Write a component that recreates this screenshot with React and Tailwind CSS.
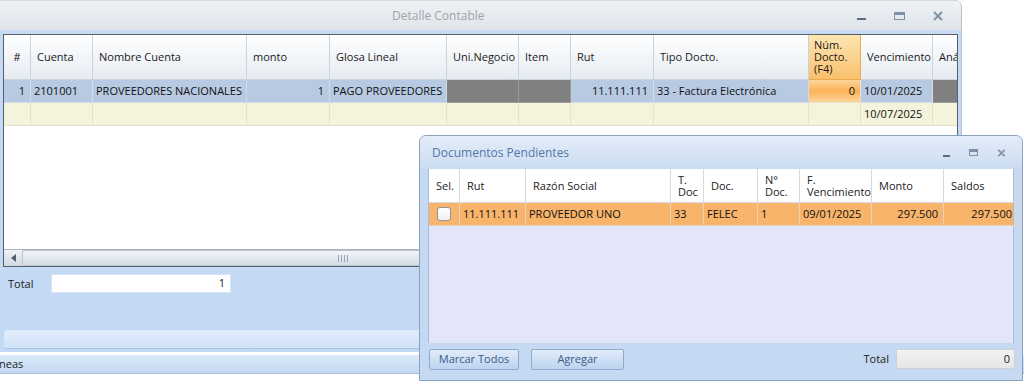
import React from 'react';

const mainCols = [
  { label: '#', w: 'w-[27px]', center: true },
  { label: 'Cuenta', w: 'w-[62px]' },
  { label: 'Nombre Cuenta', w: 'w-[154px]' },
  { label: 'monto', w: 'w-[83px]' },
  { label: 'Glosa Lineal', w: 'w-[117px]' },
  { label: 'Uni.Negocio', w: 'w-[72px]' },
  { label: 'Item', w: 'w-[52px]' },
  { label: 'Rut', w: 'w-[83px]' },
  { label: 'Tipo Docto.', w: 'w-[155px]' },
  { label: 'Núm. Docto. (F4)', w: 'w-[52px]', active: true },
  { label: 'Vencimiento', w: 'w-[72px]' },
  { label: 'Análisis', w: 'w-[80px]' },
];

const row1 = [
  { v: '1', right: true },
  { v: '2101001' },
  { v: 'PROVEEDORES NACIONALES' },
  { v: '1', right: true },
  { v: 'PAGO PROVEEDORES' },
  { v: '', dark: true },
  { v: '', dark: true },
  { v: '11.111.111', right: true },
  { v: '33 - Factura Electrónica' },
  { v: '0', right: true, active: true },
  { v: '10/01/2025' },
  { v: '', dark: true },
];

const popCols = [
  { label: ['Sel.'], w: 'w-[31px]' },
  { label: ['Rut'], w: 'w-[66px]' },
  { label: ['Razón Social'], w: 'w-[145px]' },
  { label: ['T.', 'Doc'], w: 'w-[33px]' },
  { label: ['Doc.'], w: 'w-[54px]' },
  { label: ['N°', 'Doc.'], w: 'w-[42px]' },
  { label: ['F.', 'Vencimiento'], w: 'w-[72px]' },
  { label: ['Monto'], w: 'w-[72px]' },
  { label: ['Saldos'], w: 'w-[74px]' },
];

const popRow = [
  { v: 'check' },
  { v: '11.111.111' },
  { v: 'PROVEEDOR UNO' },
  { v: '33' },
  { v: 'FELEC' },
  { v: '1' },
  { v: '09/01/2025' },
  { v: '297.500', right: true },
  { v: '297.500', right: true },
];

const WinButtons = ({ small }) => (
  <div className={`flex items-center ${small ? 'gap-[19px]' : 'gap-[28px]'}`}>
    <div className={`${small ? 'w-[7px] mt-[7px]' : 'w-[9px] mt-[7px]'} h-[2px] bg-[#5d6e84]`} />
    <div className={`${small ? 'w-[9px] h-[7px]' : 'w-[11px] h-[8px]'} border border-t-[3px] border-[#7f91a8]`} />
    <svg width={small ? 9 : 10} height={small ? 8 : 10} viewBox="0 0 10 10">
      <path d="M1 1 L9 9 M9 1 L1 9" stroke="#8595aa" strokeWidth="2.2" />
    </svg>
  </div>
);

const MainWindow = () => (
  <div className="w-[962px] h-[352px] flex flex-col bg-[#c4d9f3] border-r border-[#b7bfc9] rounded-tr-[7px] overflow-hidden">
    <div className="h-[30px] shrink-0 flex items-center bg-gradient-to-b from-[#eef1f5] to-[#e0e5eb] border-t border-[#d3d8de]">
      <div className="pl-[392px] text-[12px] text-[#a0a4a9] w-[857px]">Detalle Contable</div>
      <WinButtons />
    </div>
    <div className="h-[4px] shrink-0 bg-[#c8dbf2]" />
    <div className="mx-[3px] h-[233px] shrink-0 border border-[#56606c] bg-white flex flex-col overflow-hidden">
      <div className="flex h-[45px] shrink-0">
        {mainCols.map((c, i) =>
          c.active ? (
            <div
              key={i}
              className={`${c.w} shrink-0 flex items-center border-r border-b text-[11px] leading-[12px] bg-gradient-to-b from-[#fde6b2] to-[#f8c06c] border-[#f0a94e] pl-[5px] pr-[2px] text-[#1a1a1a]`}
            >
              {c.label}
            </div>
          ) : (
            <div
              key={i}
              className={`${c.w} shrink-0 flex items-center border-r border-b text-[11px] leading-[12px] whitespace-nowrap bg-gradient-to-b from-[#ffffff] to-[#e6ebf1] border-[#c9d3df] ${
                c.center ? 'justify-center' : 'pl-[6px]'
              } text-[#1a1a1a]`}
            >
              {c.label}
            </div>
          )
        )}
      </div>
      <div className="flex h-[23px] shrink-0 bg-[#b7cae2]">
        {row1.map((c, i) => (
          <div
            key={i}
            className={`${mainCols[i].w} shrink-0 flex items-center border-r border-b text-[11px] whitespace-nowrap overflow-hidden ${
              c.right ? 'justify-end pr-[5px]' : 'pl-[3px]'
            } ${
              c.dark
                ? 'bg-[#808080] border-[#9a9a9a]'
                : c.active
                ? 'bg-gradient-to-b from-[#fdd597] via-[#fbb257] to-[#fdd597] border-[#e9e2d0]'
                : 'border-[#d3dde9]'
            } text-[#111]`}
          >
            {c.v}
          </div>
        ))}
      </div>
      <div className="flex h-[23px] shrink-0 bg-[#f4f4dc]">
        {mainCols.map((c, i) => (
          <div
            key={i}
            className={`${c.w} shrink-0 flex items-center border-r border-b border-[#e2e2cf] text-[11px] pl-[3px] text-[#111]`}
          >
            {i === 10 ? '10/07/2025' : ''}
          </div>
        ))}
      </div>
      <div className="flex-1" />
      <div className="h-[17px] shrink-0 flex border-t border-[#aab5c3] bg-[#e4e9ef]">
        <div className="w-[18px] flex items-center justify-center bg-gradient-to-b from-[#eef2f6] to-[#d2d9e2]">
          <svg width="5" height="8" viewBox="0 0 5 8">
            <path d="M5 0 L0 4 L5 8 Z" fill="#56606c" />
          </svg>
        </div>
        <div className="w-[642px] flex items-center justify-center bg-gradient-to-b from-[#f2f5f8] to-[#d6dde6] border border-[#b9c3cf] rounded-[2px]">
          <div className="flex gap-[2px]">
            <div className="w-px h-[7px] bg-[#9aa5b3]" />
            <div className="w-px h-[7px] bg-[#9aa5b3]" />
            <div className="w-px h-[7px] bg-[#9aa5b3]" />
            <div className="w-px h-[7px] bg-[#9aa5b3]" />
          </div>
        </div>
      </div>
    </div>
    <div className="h-[63px] shrink-0 flex items-start pt-[7px] pl-[8px]">
      <div className="text-[11px] text-[#222] w-[43px] pt-[2px]">Total</div>
      <div className="w-[180px] h-[19px] bg-white border border-[#d9e4f2] flex items-center justify-end pr-[5px] text-[11px] text-[#222]">
        1
      </div>
    </div>
    <div className="mx-[4px] h-[19px] shrink-0 rounded-[3px] bg-gradient-to-b from-[#e2eefc] to-[#d0e2f8] border-b border-[#a9c2e2]" />
  </div>
);

const Popup = () => (
  <div className="absolute left-[419px] top-[135px] w-[604px] h-[246px] flex flex-col bg-[#c5d9f3] border border-[#8ba0bb] rounded-t-[7px] overflow-hidden">
    <div className="h-[33px] shrink-0 flex items-center bg-gradient-to-b from-[#e4edf8] to-[#cbdcf1]">
      <div className="pl-[12px] text-[12px] text-[#5279a8] w-[523px]">Documentos Pendientes</div>
      <WinButtons small />
    </div>
    <div className="mx-[8px] h-[174px] shrink-0 border-l border-r border-[#a9bdd6] bg-[#e3e6f8] flex flex-col">
      <div className="flex h-[34px] shrink-0 bg-white">
        {popCols.map((c, i) => (
          <div
            key={i}
            className={`${c.w} shrink-0 flex flex-col justify-center border-r border-b border-[#d6d9de] pl-[7px] text-[11px] leading-[12px] text-[#222] whitespace-nowrap`}
          >
            {c.label.map((l, j) => (
              <div key={j} className="h-[12px]">{l}</div>
            ))}
          </div>
        ))}
      </div>
      <div className="flex h-[23px] shrink-0 bg-[#f7b46a]">
        {popRow.map((c, i) => (
          <div
            key={i}
            className={`${popCols[i].w} shrink-0 flex items-center border-r border-b border-[#e8d4bd] text-[11px] text-[#111] whitespace-nowrap ${
              c.right ? 'justify-end pr-[5px]' : i === 0 ? 'justify-center' : 'pl-[3px]'
            }`}
          >
            {c.v === 'check' ? (
              <div className="w-[14px] h-[14px] rounded-[3px] bg-gradient-to-b from-[#ffffff] to-[#eceef1] border border-[#8f969e]" />
            ) : (
              c.v
            )}
          </div>
        ))}
      </div>
    </div>
    <div className="flex items-center h-[32px] pl-[9px] pr-[7px]">
      <button className="w-[90px] h-[21px] rounded-[2px] border border-[#8eaacd] bg-gradient-to-b from-[#e1ecf9] to-[#bdd3ef] text-[11px] text-[#3c5b88]">
        Marcar Todos
      </button>
      <button className="ml-[12px] w-[93px] h-[21px] rounded-[2px] border border-[#8eaacd] bg-gradient-to-b from-[#e1ecf9] to-[#bdd3ef] text-[11px] text-[#3c5b88]">
        Agregar
      </button>
      <div className="flex-1" />
      <div className="text-[11px] text-[#222] mr-[7px]">Total</div>
      <div className="w-[119px] h-[20px] bg-gradient-to-b from-[#f2f2f2] to-[#e6e6e6] border border-[#d0d0d0] flex items-center justify-end pr-[4px] text-[11px] text-[#222]">
        0
      </div>
    </div>
  </div>
);

export default function App() {
  return (
    <div className="relative w-[1024px] h-[383px] bg-white overflow-hidden font-['Open_Sans','Noto_Sans',sans-serif]">
      <MainWindow />
      <div className="h-[3px]" />
      <div className="h-[19px] w-[1024px] flex items-center bg-gradient-to-b from-[#dce9fa] to-[#c3d8f2] border-b border-[#a7bedc] text-[11px] text-[#222]">
        <span className="-ml-[1px]">neas</span>
      </div>
      <Popup />
    </div>
  );
}
